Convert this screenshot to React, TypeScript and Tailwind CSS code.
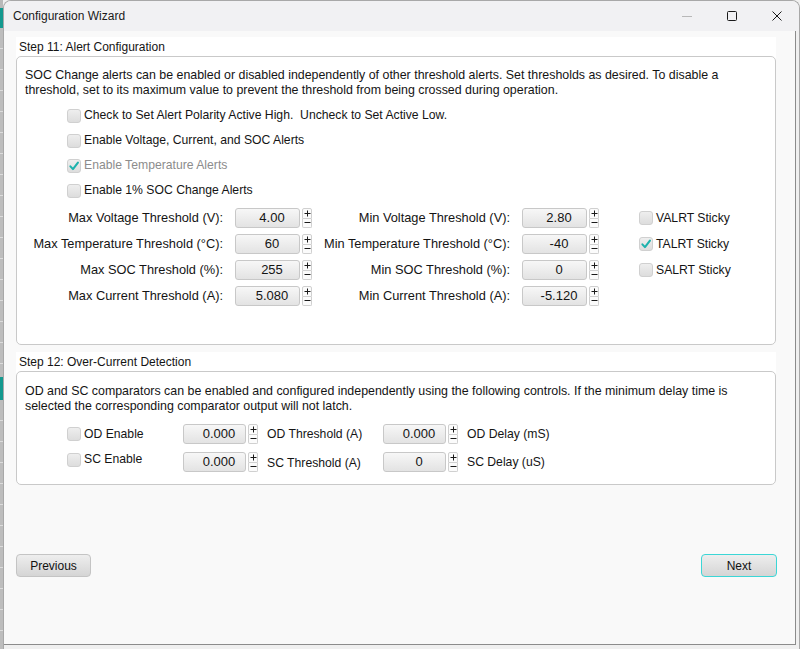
import React from 'react';

const CheckBox: React.FC<{ checked?: boolean }> = ({ checked }) => (
  <span className="w-[14px] h-[14px] shrink-0 rounded-[3px] border border-[#d0d0d0] bg-gradient-to-b from-[#eeeeee] to-[#dddddd] flex items-center justify-center">
    {checked && (
      <svg viewBox="0 0 14 14" className="w-[14px] h-[14px]">
        <path d="M2.8 7.4 L5.8 10.6 L11.6 3" fill="none" stroke="#1db2ad" strokeWidth={2.4} strokeLinecap="round" strokeLinejoin="round" />
      </svg>
    )}
  </span>
);

const CheckRow: React.FC<{ label: string; checked?: boolean; disabled?: boolean }> = ({ label, checked, disabled }) => (
  <div className="flex items-center gap-[3px] text-[12.2px] leading-[15px] whitespace-pre">
    <CheckBox checked={checked} />
    <span className={disabled ? 'text-[#8c8c8c]' : 'text-[#141414]'}>{label}</span>
  </div>
);

// number field with the little +/- stepper next to it
const Spinner: React.FC<{ value: string; w: string }> = ({ value, w }) => (
  <div className="flex h-[20px]">
    <div className={`${w} h-full rounded-[3px] border border-[#c8c8c8] bg-gradient-to-b from-[#f7f7f7] to-[#e3e3e3] flex items-center justify-center pl-[9px] text-[13px] text-[#141414]`}>
      {value}
    </div>
    <div className="ml-[2px] w-[10px] h-full flex flex-col">
      <div className="flex-1 border border-[#d0d0d0] rounded-t-[2px] bg-[#fbfbfb] flex items-center justify-center">
        <svg viewBox="0 0 7 7" className="w-[7px] h-[7px]">
          <path d="M0.5 3.5 H6.5 M3.5 0.5 V6.5" stroke="#1a1a1a" strokeWidth={1} />
        </svg>
      </div>
      <div className="flex-1 border border-t-0 border-[#d0d0d0] rounded-b-[2px] bg-[#fbfbfb] flex items-center justify-center">
        <svg viewBox="0 0 7 7" className="w-[7px] h-[7px]">
          <path d="M0.5 3.5 H6.5" stroke="#1a1a1a" strokeWidth={1} />
        </svg>
      </div>
    </div>
  </div>
);

const Section: React.FC<{ title: string; boxH: string; children: React.ReactNode }> = ({ title, boxH, children }) => (
  <div className="w-[760px] bg-white rounded-b-[5px]">
    <div className="h-[19px] pt-[2px] leading-[17px] pl-[3px] text-[12px] text-[#141414]">{title}</div>
    <div className={`${boxH} border border-[#c9c9c9] rounded-[5px] bg-white`}>{children}</div>
  </div>
);

const thresholds = [
  { l1: 'Max Voltage Threshold (V):', v1: '4.00', l2: 'Min Voltage Threshold (V):', v2: '2.80', sticky: 'VALRT Sticky', on: false },
  { l1: 'Max Temperature Threshold (°C):', v1: '60', l2: 'Min Temperature Threshold (°C):', v2: '-40', sticky: 'TALRT Sticky', on: true },
  { l1: 'Max SOC Threshold (%):', v1: '255', l2: 'Min SOC Threshold (%):', v2: '0', sticky: 'SALRT Sticky', on: false },
  { l1: 'Max Current Threshold (A):', v1: '5.080', l2: 'Min Current Threshold (A):', v2: '-5.120', sticky: '', on: false },
];

const WizardButton: React.FC<{ label: string; focused?: boolean; w: string }> = ({ label, focused, w }) => (
  <button
    className={`${w} h-[23px] rounded-[4px] border ${focused ? 'border-[#3cd6d6]' : 'border-[#c4c4c4]'} bg-gradient-to-b from-[#eeeeee] to-[#d5d5d5] text-[12px] text-[#111]`}
  >
    {label}
  </button>
);

export default function App() {
  return (
    <div className="w-[800px] h-[649px] overflow-hidden flex bg-[#f0f0f0] font-['Liberation_Sans',Arial,sans-serif] text-[#141414]">
      {/* desktop peeking out on the left */}
      <div className="w-[3px] h-full flex flex-col bg-[#b9b9b9]">
        <div className="h-[8px]" />
        <div className="h-[20px] bg-[#14998f]" />
        <div className="h-[349px] bg-[repeating-linear-gradient(to_bottom,#bdbdbd_0px,#bdbdbd_20px,#dcdcdc_20px,#dcdcdc_21px)]" />
        <div className="h-[23px] bg-[#14998f]" />
        <div className="flex-1 bg-[repeating-linear-gradient(to_bottom,#bdbdbd_0px,#bdbdbd_20px,#dcdcdc_20px,#dcdcdc_21px)]" />
      </div>

      <div className="flex-1 flex flex-col rounded-tl-[8px] rounded-tr-[8px] border-l border-t border-r border-[#a8a8a8] bg-[#f0f0f0] overflow-hidden">
        {/* title bar */}
        <div className="h-[30px] shrink-0 flex items-center bg-[#f1f1f3]">
          <span className="ml-[9px] text-[12px] text-[#1a1a1a]">Configuration Wizard</span>
          <div className="ml-auto flex items-center h-full">
            <div className="w-[44px] h-full flex items-center justify-center">
              <svg viewBox="0 0 10 10" className="w-[10px] h-[10px]">
                <path d="M0 5.5 H10" stroke="#b8b8b8" strokeWidth={1} />
              </svg>
            </div>
            <div className="w-[46px] h-full flex items-center justify-center">
              <svg viewBox="0 0 10 10" className="w-[10px] h-[10px]">
                <rect x="0.5" y="0.5" width="9" height="9" rx="1" fill="none" stroke="#1a1a1a" strokeWidth={1} />
              </svg>
            </div>
            <div className="w-[44px] h-full flex items-center justify-center">
              <svg viewBox="0 0 10 10" className="w-[10px] h-[10px]">
                <path d="M0.5 0.5 L9.5 9.5 M9.5 0.5 L0.5 9.5" stroke="#1a1a1a" strokeWidth={1} />
              </svg>
            </div>
          </div>
        </div>

        <div className="flex-1 flex">
          <div className="w-[792px] h-[614px] bg-[#f9f9f9] border-r border-b border-[#8c8c8c] pl-[12px] pt-[6px] flex flex-col">
            <Section title="Step 11: Alert Configuration" boxH="h-[289px]">
              <p className="pl-[8px] pt-[11px] text-[12.4px] leading-[15px] whitespace-nowrap">
                SOC Change alerts can be enabled or disabled independently of other threshold alerts. Set thresholds as desired. To disable a
                <br />
                threshold, set to its maximum value to prevent the threshold from being crossed during operation.
              </p>
              <div className="ml-[50px] mt-[5px] flex flex-col">
                <div className="h-[25px] flex items-center"><CheckRow label="Check to Set Alert Polarity Active High.  Uncheck to Set Active Low." /></div>
                <div className="h-[25px] flex items-center"><CheckRow label="Enable Voltage, Current, and SOC Alerts" /></div>
                <div className="h-[25px] flex items-center"><CheckRow label="Enable Temperature Alerts" checked disabled /></div>
                <div className="h-[25px] flex items-center"><CheckRow label="Enable 1% SOC Change Alerts" /></div>
              </div>
              <div className="mt-[2px] flex flex-col">
                {thresholds.map((t) => (
                  <div key={t.l1} className="h-[26px] flex items-center">
                    <div className="w-[206px] text-right text-[12.8px] whitespace-nowrap">{t.l1}</div>
                    <div className="ml-[12px]"><Spinner value={t.v1} w="w-[65px]" /></div>
                    <div className="w-[198px] text-right text-[12.8px] whitespace-nowrap">{t.l2}</div>
                    <div className="ml-[12px]"><Spinner value={t.v2} w="w-[65px]" /></div>
                    {t.sticky && (
                      <div className="ml-[40px]"><CheckRow label={t.sticky} checked={t.on} /></div>
                    )}
                  </div>
                ))}
              </div>
            </Section>

            <div className="mt-[7px]">
              <Section title="Step 12: Over-Current Detection" boxH="h-[114px]">
                <p className="pl-[8px] pt-[12px] text-[12.4px] leading-[15px] whitespace-nowrap">
                  OD and SC comparators can be enabled and configured independently using the following controls. If the minimum delay time is
                  <br />
                  selected the corresponding comparator output will not latch.
                </p>
                <div className="mt-[10px] ml-[50px] flex items-center h-[20px]">
                  <div className="w-[116px]"><CheckRow label="OD Enable" /></div>
                  <Spinner value="0.000" w="w-[63px]" />
                  <div className="ml-[9px] w-[116px] text-[12.2px]">OD Threshold (A)</div>
                  <Spinner value="0.000" w="w-[63px]" />
                  <div className="ml-[9px] text-[12.2px]">OD Delay (mS)</div>
                </div>
                <div className="mt-[8px] ml-[50px] flex items-center h-[20px]">
                  <div className="w-[116px] self-start"><CheckRow label="SC Enable" /></div>
                  <Spinner value="0.000" w="w-[63px]" />
                  <div className="ml-[9px] w-[116px] text-[12.2px] pt-[3px]">SC Threshold (A)</div>
                  <Spinner value="0" w="w-[63px]" />
                  <div className="ml-[9px] text-[12.2px]">SC Delay (uS)</div>
                </div>
              </Section>
            </div>

            <div className="mt-[69px] w-[761px] flex justify-between">
              <WizardButton label="Previous" w="w-[75px]" />
              <WizardButton label="Next" focused w="w-[76px]" />
            </div>
          </div>
          <div className="flex-1 bg-[#f0f0f0]" />
        </div>
      </div>
    </div>
  );
}
